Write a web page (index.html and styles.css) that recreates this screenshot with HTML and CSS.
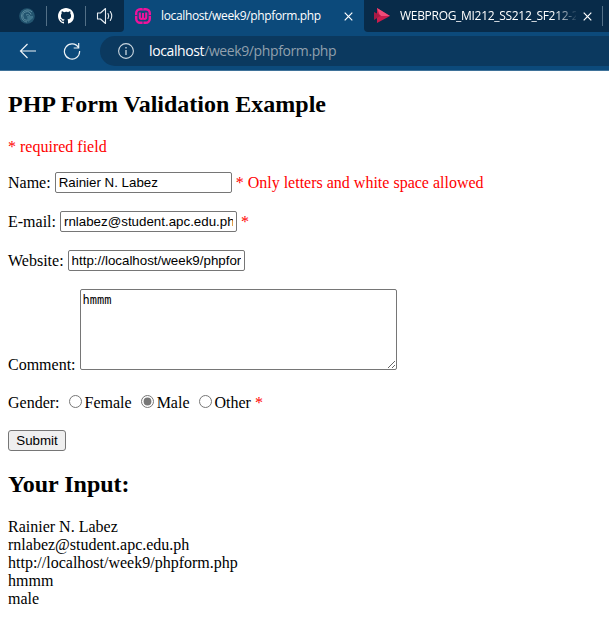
FILE: index.html
```html
<!DOCTYPE html>
<html lang="en">
<head>
<meta charset="utf-8">
<title>localhost/week9/phpform.php</title>
<link rel="stylesheet" href="styles.css">
</head>
<body>
<header class="browser">
  <div class="tabs">
    <div class="pinned">
      <svg class="swirl" width="16" height="16" viewBox="0 0 16 16"><circle cx="8" cy="8" r="7.800" fill="#235570"/><path d="M13 4A6 6 0 1 0 8 14M12 6.5A4.2 4.2 0 1 0 9 12M7 7c2-1 4 0 4 2l-1 2" fill="none" stroke="#5b8b9f" stroke-width="1"/><path d="M8 8h6v2l-5 4z" fill="#3f748b"/></svg>
    </div>
    <div class="pinned github">
      <svg width="16" height="16" viewBox="0 0 16 16"><path fill="#fff" d="M8 0C3.58 0 0 3.58 0 8c0 3.54 2.29 6.53 5.47 7.59.4.07.55-.17.55-.38 0-.19-.01-.82-.01-1.49-2.01.37-2.53-.49-2.69-.94-.09-.23-.48-.94-.82-1.13-.28-.15-.68-.52-.01-.53.63-.01 1.08.58 1.23.82.72 1.21 1.87.87 2.33.66.07-.52.28-.87.51-1.07-1.78-.2-3.64-.89-3.64-3.95 0-.87.31-1.59.82-2.15-.08-.2-.36-1.02.08-2.12 0 0 .67-.21 2.2.82A7.6 7.6 0 0 1 8 3.87c.68 0 1.36.09 2 .27 1.53-1.04 2.2-.82 2.2-.82.44 1.1.16 1.92.08 2.12.51.56.82 1.27.82 2.15 0 3.07-1.87 3.75-3.65 3.95.29.25.54.73.54 1.48 0 1.07-.01 1.93-.01 2.2 0 .21.15.46.55.38A8.01 8.01 0 0 0 16 8c0-4.42-3.58-8-8-8z"/></svg>
    </div>
    <div class="pinned sound">
      <svg width="18" height="18" viewBox="0 0 18 18" fill="none" stroke="#e7edf2" stroke-width="1.1" stroke-linejoin="round" stroke-linecap="round"><path d="M1.5 6h3l5-4.5v15l-5-4.500h-3z"/><path d="M12 6.500q1.500 2.500 0 5M14.300 4.500q2.900 4.500 0 9"/></svg>
    </div>
    <div class="tab active">
      <svg class="fav" width="16" height="16" viewBox="0 0 16 16"><rect x="1.200" y="1.200" width="13.600" height="13.600" rx="4" fill="none" stroke="#f0129b" stroke-width="2.400"/><path d="M4.800 4.500v4.800q0 1.700 1.600 1.700T8 9.300V5v4.300Q8 11 9.600 11t1.600-1.700V4.500" fill="none" stroke="#f0129b" stroke-width="2.100"/><path d="M8 0v1.500M8 13v3M0 7.500h2.500M13.500 7.500H16" stroke="#0c4a7b" stroke-width=".8"/></svg>
      <span class="title">localhost/week9/phpform.php</span>
      <svg class="close" width="9" height="9" viewBox="0 0 9 9"><path d="M.7.7l7.600 7.600M8.300.7L.7 8.300" stroke="#fff" stroke-width="1.200"/></svg>
    </div>
    <div class="tab other">
      <svg class="play" width="16" height="16" viewBox="0 0 16 16"><path d="M3 0l13 8L3 15z" fill="#ca1d4d"/><path d="M3 0l13 8H6z" fill="#f04b78"/><path d="M0 4l7 3.500L0 12z" fill="#a81b45"/></svg>
      <span class="title">WEBPROG_MI212_SS212_SF212-2</span>
      <svg class="close" width="9" height="9" viewBox="0 0 9 9"><path d="M.7.7l7.600 7.600M8.300.7L.7 8.300" stroke="#fff" stroke-width="1.200"/></svg>
    </div>
  </div>
  <div class="toolbar">
    <svg class="back" width="18" height="16" viewBox="0 0 18 16" fill="none" stroke="#edf3f7" stroke-width="1.200"><path d="M17 8H1.500M8.500 1L1.500 8l7 7"/></svg>
    <svg class="reload" width="18" height="18" viewBox="0 0 18 18" fill="none" stroke="#edf3f7" stroke-width="1.200"><path d="M15.500 5.500A7.600 7.600 0 1 0 16.600 9M15.700 1v5h-5"/></svg>
    <div class="address">
      <svg width="16" height="16" viewBox="0 0 16 16" fill="none" stroke="#cbd7e0" stroke-width="1.100"><circle cx="8" cy="8" r="7.400"/><path d="M8 7v5M8 4v1.500" stroke-width="1.300"/></svg>
      <span class="url"><span class="host">localhost</span>/week9/phpform.php</span>
    </div>
  </div>
</header>
<main>
  <h2>PHP Form Validation Example</h2>
  <p class="error">* required field</p>
  <form>
    <div class="row"><label for="name">Name:</label><input class="text" id="name" value="Rainier N. Labez"><span class="error">* Only letters and white space allowed</span></div>
    <div class="row"><label for="email">E-mail:</label><input class="text" id="email" value="rnlabez@student.apc.edu.ph"><span class="error">*</span></div>
    <div class="row"><label for="site">Website:</label><input class="text" id="site" value="http://localhost/week9/phpform.php"></div>
    <div class="row comment"><label for="comment">Comment:</label><textarea id="comment" spellcheck="false">hmmm</textarea></div>
    <div class="row gender"><span class="legend">Gender:</span><label><input type="radio" name="gender">Female</label><label><input type="radio" name="gender" checked>Male</label><label><input type="radio" name="gender">Other</label><span class="error">*</span></div>
    <button type="button">Submit</button>
  </form>
  <h2 class="result">Your Input:</h2>
  <div class="output">Rainier N. Labez<br>rnlabez@student.apc.edu.ph<br>http://localhost/week9/phpform.php<br>hmmm<br>male</div>
</main>
</body>
</html>
```
FILE: styles.css
```css
* { box-sizing: border-box; }
body {
  margin: 0;
  height: 619px;
  overflow: hidden;
  background: #fff;
  color: #000;
  font: 16px/18px "Liberation Serif", serif;
}
svg { display: block; flex: none; }

.browser {
  height: 71px;
  background: #0c4a7b;
  border-bottom: 1px solid #3f7299;
  font-family: "Open Sans", sans-serif;
  color: #fff;
}
.tabs { display: flex; height: 32px; background: #0c4a7b; }
.pinned {
  display: flex;
  align-items: center;
  justify-content: center;
  width: 39px;
  background: linear-gradient(#537087, #537087) right 6px / 1px 20px no-repeat #082b49;
}
.pinned:first-child { width: 47px; padding-left: 7px; }
.pinned.github { padding-right: 2px; }
.pinned.sound { width: 38px; background: #082b49; border-bottom-right-radius: 4px; }
.tab { display: flex; align-items: center; }
.tab .title { white-space: nowrap; font-size: 12px; line-height: 16px; }
.active { width: 240px; padding-left: 11px; }
.active .title { width: 161px; margin-left: 10px; letter-spacing: -0.36px; }
.active .close { margin-left: 22px; }
.other {
  flex: 1;
  padding-left: 10px;
  border-bottom-left-radius: 4px;
  background: linear-gradient(#537087, #537087) right 6px top 6px / 1px 20px no-repeat #082b49;
}
.other .title {
  width: 176px;
  margin-left: 10px;
  overflow: hidden;
  letter-spacing: -0.3px;
  -webkit-mask-image: linear-gradient(90deg, #000 155px, transparent 178px);
  mask-image: linear-gradient(90deg, #000 155px, transparent 178px);
}
.other .close { margin-left: 7px; }

.toolbar { display: flex; align-items: center; height: 38px; padding-left: 19px; }
.reload { margin-left: 26px; }
.address {
  display: flex;
  align-items: center;
  flex: 1;
  height: 30px;
  margin-left: 19px;
  padding-left: 18px;
  border-radius: 15px 0 0 15px;
  background: #0b395f;
}
.url { margin-left: 15px; color: #91a0ad; font-size: 14px; line-height: 20px; letter-spacing: -0.39px; }
.host { color: #fff; }

main { padding: 20px 8px 0; }
h2 { margin: 0; font-size: 24px; line-height: 27px; }
p { margin: 20px 0 16px; }
.error { color: #f00; }
.row { display: flex; align-items: center; height: 21px; margin-bottom: 18px; }
.row .error { margin-left: 4px; }
.text {
  width: 177px;
  height: 21px;
  margin: 0 0 0 4px;
  padding: 2px 3px;
  border: 1px solid #767676;
  border-radius: 2px;
  font: 13.333px "Liberation Sans", sans-serif;
}
.comment { height: 81px; align-items: flex-end; }
.comment label { margin-bottom: -4px; }
textarea {
  width: 317px;
  height: 81px;
  margin: 0 0 0 4px;
  padding: 3px 2px 2px;
  border: 1px solid #767676;
  border-radius: 2px;
  font: 12px/15px "DejaVu Sans Mono", monospace;
}
.gender { height: 18px; margin: 24px 0 18px; }
.gender label { display: flex; align-items: center; margin-right: 9px; }
.gender label:last-of-type { margin-right: 0; }
.legend { margin-right: 9px; }
.gender input { width: 13px; height: 13px; margin: 0 3px 3px 0; accent-color: #767676; }
button {
  display: block;
  width: 58px;
  height: 21px;
  padding: 0;
  border: 1px solid #767676;
  border-radius: 3px;
  background: #efefef;
  color: #000;
  font: 13.333px "Liberation Sans", sans-serif;
}
.result { margin: 20px 0; }
```
